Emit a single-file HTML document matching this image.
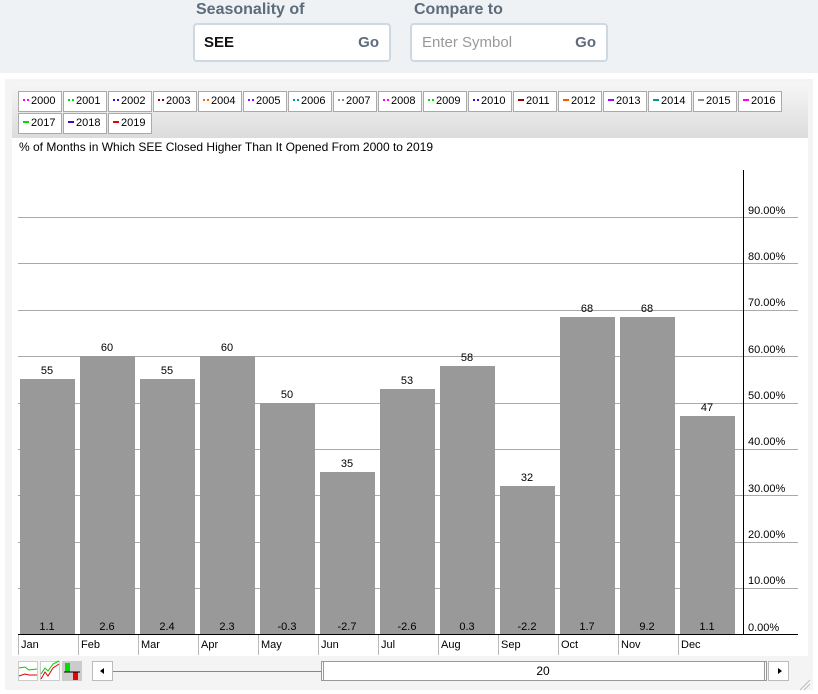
<!DOCTYPE html>
<html><head><style>
*{margin:0;padding:0;box-sizing:border-box}
body{width:818px;height:694px;background:#fff;font-family:"Liberation Sans",Arial,sans-serif;position:relative;overflow:hidden}
.top{position:absolute;left:0;top:0;width:818px;height:73px;background:#eef2f5}
.lbl{position:absolute;top:1px;font-size:16px;font-weight:bold;color:#5e6b7a}
.inp{position:absolute;top:23px;height:39px;background:#fff;border:2px solid #cdd8e2;border-radius:4px}
.inp span{position:absolute;top:9px;font-size:15px}
.go{right:10px;font-weight:bold;color:#5e6b7a}
.panel{position:absolute;left:5px;top:79px;width:808px;height:611px;background:#f4f4f4}
.leg{position:absolute;left:12px;top:83px;width:796px;height:55px;background:linear-gradient(#f6f6f6,#dcdcdc)}
.b{position:absolute;height:21px;width:44px;background:#fff;border:1px solid #aaa;font-size:11px;line-height:19px;padding-left:4px;color:#000;white-space:nowrap}
.b i{display:inline-block;width:6px;height:2px;margin-right:2px;vertical-align:3px;border-top:2px dotted}
.b i.s{border-top-style:solid}
.chart{position:absolute;left:12px;top:138px;width:796px;height:518px;background:#fff}
.t{position:absolute;font-size:12px;color:#000;white-space:nowrap}
.sm{font-size:11px}
</style></head><body>
<div class="top"></div>
<div class="lbl" style="left:196px">Seasonality of</div>
<div class="lbl" style="left:414px">Compare to</div>
<div class="inp" style="left:193px;width:198px"><span style="left:9px;font-weight:bold;color:#111">SEE</span><span class="go">Go</span></div>
<div class="inp" style="left:410px;width:198px"><span style="left:10px;color:#999">Enter Symbol</span><span class="go">Go</span></div>
<div class="panel"></div>
<div class="leg"></div>
<div class="chart"></div>
<svg style="position:absolute;left:0;top:0" width="818" height="694">
<g stroke="#aaa" stroke-width="1">
<line x1="18" y1="217.5" x2="798" y2="217.5"/><line x1="18" y1="263.5" x2="798" y2="263.5"/>
<line x1="18" y1="310.5" x2="798" y2="310.5"/><line x1="18" y1="356.5" x2="798" y2="356.5"/>
<line x1="18" y1="403.5" x2="798" y2="403.5"/><line x1="18" y1="449.5" x2="798" y2="449.5"/>
<line x1="18" y1="495.5" x2="798" y2="495.5"/><line x1="18" y1="542.5" x2="798" y2="542.5"/>
<line x1="18" y1="588.5" x2="798" y2="588.5"/>
</g>
<g fill="#999">
<rect x="20" y="379" width="55" height="255"/><rect x="80" y="356" width="55" height="278"/>
<rect x="140" y="379" width="55" height="255"/><rect x="200" y="356" width="55" height="278"/>
<rect x="260" y="403" width="55" height="231"/><rect x="320" y="472" width="55" height="162"/>
<rect x="380" y="389" width="55" height="245"/><rect x="440" y="366" width="55" height="268"/>
<rect x="500" y="486" width="55" height="148"/><rect x="560" y="317" width="55" height="317"/>
<rect x="620" y="317" width="55" height="317"/><rect x="680" y="416" width="55" height="218"/>
</g>
<line x1="743.5" y1="170" x2="743.5" y2="634" stroke="#000"/>
<line x1="18" y1="634.5" x2="798" y2="634.5" stroke="#000"/>
<g stroke="#bbb"><line x1="18.5" y1="635" x2="18.5" y2="655"/><line x1="78.5" y1="635" x2="78.5" y2="655"/><line x1="138.5" y1="635" x2="138.5" y2="655"/><line x1="198.5" y1="635" x2="198.5" y2="655"/><line x1="258.5" y1="635" x2="258.5" y2="655"/><line x1="318.5" y1="635" x2="318.5" y2="655"/><line x1="378.5" y1="635" x2="378.5" y2="655"/><line x1="438.5" y1="635" x2="438.5" y2="655"/><line x1="498.5" y1="635" x2="498.5" y2="655"/><line x1="558.5" y1="635" x2="558.5" y2="655"/><line x1="618.5" y1="635" x2="618.5" y2="655"/><line x1="678.5" y1="635" x2="678.5" y2="655"/></g>
<g font-family="Liberation Sans,Arial" font-size="11" fill="#000" text-anchor="middle">
<text x="47" y="374">55</text><text x="107" y="351">60</text><text x="167" y="374">55</text><text x="227" y="351">60</text><text x="287" y="398">50</text><text x="347" y="467">35</text><text x="407" y="384">53</text><text x="467" y="361">58</text><text x="527" y="481">32</text><text x="587" y="312">68</text><text x="647" y="312">68</text><text x="707" y="411">47</text>
<text x="47" y="630">1.1</text><text x="107" y="630">2.6</text><text x="167" y="630">2.4</text><text x="227" y="630">2.3</text><text x="287" y="630">-0.3</text><text x="347" y="630">-2.7</text><text x="407" y="630">-2.6</text><text x="467" y="630">0.3</text><text x="527" y="630">-2.2</text><text x="587" y="630">1.7</text><text x="647" y="630">9.2</text><text x="707" y="630">1.1</text>
</g>
<g font-family="Liberation Sans,Arial" font-size="11" fill="#000">
<text x="748" y="214">90.00%</text><text x="748" y="260">80.00%</text><text x="748" y="306">70.00%</text><text x="748" y="353">60.00%</text><text x="748" y="399">50.00%</text><text x="748" y="445">40.00%</text><text x="748" y="492">30.00%</text><text x="748" y="538">20.00%</text><text x="748" y="584">10.00%</text><text x="748" y="631">0.00%</text>
<text x="21" y="648">Jan</text><text x="81" y="648">Feb</text><text x="141" y="648">Mar</text><text x="201" y="648">Apr</text><text x="261" y="648">May</text><text x="321" y="648">Jun</text><text x="381" y="648">Jul</text><text x="441" y="648">Aug</text><text x="501" y="648">Sep</text><text x="561" y="648">Oct</text><text x="621" y="648">Nov</text><text x="681" y="648">Dec</text>
</g>
<!-- bottom controls -->
<rect x="18.5" y="661.5" width="19" height="19" fill="#fff" stroke="#ccc"/>
<polyline points="19,668 25,667 29,670 37,669" fill="none" stroke="#0c0"/><polyline points="19,676 25,674 29,675 37,675" fill="none" stroke="#d00"/>
<rect x="40.5" y="661.5" width="19" height="19" fill="#fff" stroke="#ccc"/>
<polyline points="41,674 45,668 48,671 53,664 59,661" fill="none" stroke="#0c0"/><polyline points="41,679 45,672 48,676 53,668 59,664" fill="none" stroke="#d00"/>
<rect x="62" y="661" width="20" height="20" fill="#ccc"/>
<rect x="65" y="663" width="5" height="9" fill="#0d0"/><rect x="73" y="672" width="5" height="8" fill="#e00"/><line x1="64" y1="672" x2="80" y2="672" stroke="#000"/>
<rect x="92.5" y="661.5" width="20" height="19" fill="#fff" stroke="#bbb"/><polygon points="100,671 104,668 104,674" fill="#000"/>
<line x1="113" y1="671.5" x2="321" y2="671.5" stroke="#888"/>
<rect x="321.5" y="661.5" width="445" height="19" fill="#fff" stroke="#999"/>
<line x1="323.5" y1="662" x2="323.5" y2="680" stroke="#999"/><line x1="764.5" y1="662" x2="764.5" y2="680" stroke="#999"/>
<text x="543" y="675" font-family="Liberation Sans,Arial" font-size="12" text-anchor="middle">20</text>
<rect x="768.5" y="661.5" width="20" height="19" fill="#fff" stroke="#bbb"/><polygon points="782,671 778,668 778,674" fill="#000"/>
<g stroke="#bbb"><line x1="800" y1="690" x2="810" y2="680"/><line x1="804" y1="690" x2="810" y2="684"/></g>
</svg>
<div class="t" style="left:19px;top:140px">% of Months in Which SEE Closed Higher Than It Opened From 2000 to 2019</div>
<div class="b" style="left:18px;top:91px"><i style="color:#f0f"></i>2000</div>
<div class="b" style="left:63px;top:91px"><i style="color:#0d0"></i>2001</div>
<div class="b" style="left:108px;top:91px"><i style="color:#40c"></i>2002</div>
<div class="b" style="left:153px;top:91px"><i style="color:#800"></i>2003</div>
<div class="b" style="left:198px;top:91px"><i style="color:#f60"></i>2004</div>
<div class="b" style="left:243px;top:91px"><i style="color:#a0f"></i>2005</div>
<div class="b" style="left:288px;top:91px"><i style="color:#099"></i>2006</div>
<div class="b" style="left:333px;top:91px"><i style="color:#888"></i>2007</div>
<div class="b" style="left:378px;top:91px"><i style="color:#f0f"></i>2008</div>
<div class="b" style="left:423px;top:91px"><i style="color:#0d0"></i>2009</div>
<div class="b" style="left:468px;top:91px"><i style="color:#40c"></i>2010</div>
<div class="b" style="left:513px;top:91px"><i class="s" style="color:#900"></i>2011</div>
<div class="b" style="left:558px;top:91px"><i class="s" style="color:#f50"></i>2012</div>
<div class="b" style="left:603px;top:91px"><i class="s" style="color:#a0f"></i>2013</div>
<div class="b" style="left:648px;top:91px"><i class="s" style="color:#099"></i>2014</div>
<div class="b" style="left:693px;top:91px"><i class="s" style="color:#888"></i>2015</div>
<div class="b" style="left:738px;top:91px"><i class="s" style="color:#f0f"></i>2016</div>
<div class="b" style="left:18px;top:113px"><i class="s" style="color:#0d0"></i>2017</div>
<div class="b" style="left:63px;top:113px"><i class="s" style="color:#40c"></i>2018</div>
<div class="b" style="left:108px;top:113px"><i class="s" style="color:#e00"></i>2019</div>
</body></html>
